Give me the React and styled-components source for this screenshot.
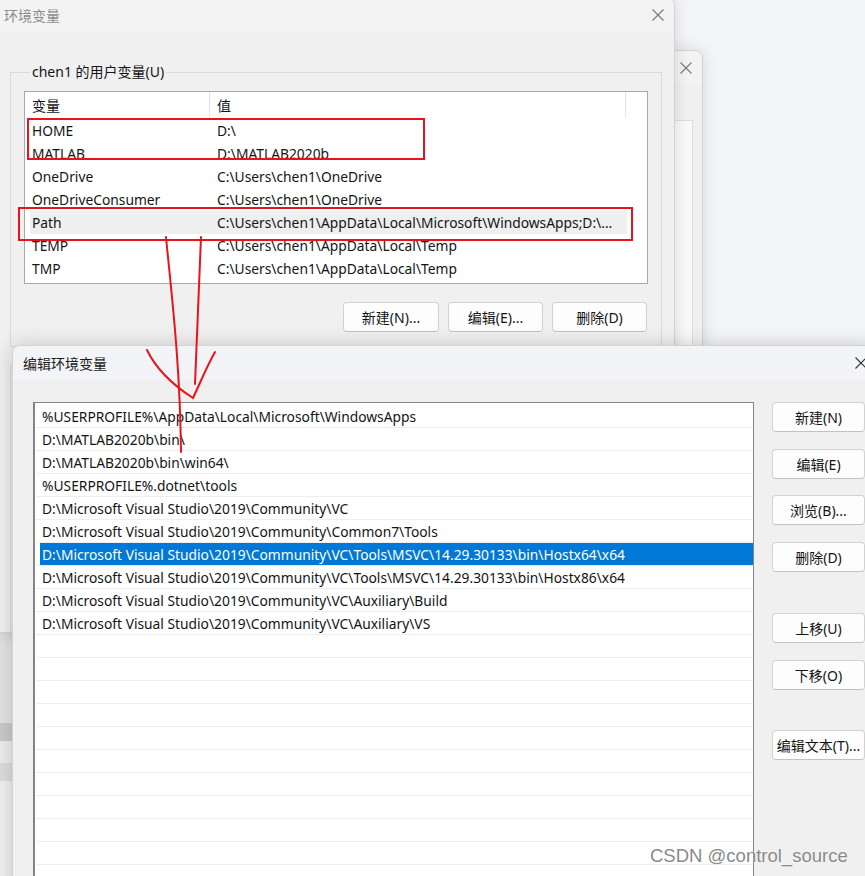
import React from 'react';
import styled, { createGlobalStyle } from 'styled-components';

const uiFont = `"Noto Sans", "Noto Sans CJK SC", sans-serif`;

const GlobalStyle = createGlobalStyle`
  * { box-sizing: border-box; }
  html, body { margin: 0; padding: 0; }
  body { font-family: ${uiFont}; }
`;

const Desktop = styled.div`
  position: relative;
  width: 865px;
  height: 876px;
  overflow: hidden;
  background: #f4f5f7;
  font-family: ${uiFont};
  font-size: 14px;
  color: #141414;
`;

// windows sit on the desktop canvas, so they are placed absolutely
const Window = styled.div`
  position: absolute;
  display: flex;
  flex-direction: column;
  background: #f0f0f0;
  border: 1px solid #d3d3d3;
  box-shadow: 0 0 16px rgba(0, 0, 0, 0.13);
  overflow: hidden;
`;

const OwnerWindow = styled(Window)`
  left: -20px;
  top: 600px;
  width: 420px;
  height: 320px;
  z-index: 0;
  background: linear-gradient(
    #e3e3e3 0 122px,
    #c9c9c9 122px 140px,
    #ececec 140px 162px,
    #dcdcdc 162px 180px,
    #f0f0f0 180px
  );
`;

const SettingsWindow = styled(Window)`
  left: 300px;
  top: 50px;
  width: 403px;
  height: 320px;
  border-radius: 0 8px 0 0;
  z-index: 1;
`;

const EnvWindow = styled(Window)`
  left: -2px;
  top: -3px;
  width: 677px;
  height: 636px;
  border-radius: 0 8px 0 0;
  z-index: 2;
`;

const EditWindow = styled(Window)`
  left: 12px;
  top: 345px;
  width: 866px;
  height: 560px;
  border-radius: 8px 0 0 0;
  z-index: 3;
  box-shadow: 0 0 20px rgba(0, 0, 0, 0.18);
`;

const TitleBar = styled.div`
  flex: none;
  height: ${p => p.$height}px;
  display: flex;
  align-items: center;
  justify-content: space-between;
  padding: 0 10px 0 ${p => p.$indent}px;
  background: ${p => (p.$active ? '#f2f4f8' : '#f3f3f3')};
`;

const TitleText = styled.span`
  font-size: 14px;
  color: ${p => (p.$active ? '#1b1b1b' : '#8c8c8c')};
`;

const CloseMark = styled.svg`
  width: 12px;
  height: 12px;
  flex: none;
`;

const CloseIcon = ({ color = '#666' }) => (
  <CloseMark viewBox="0 0 12 12">
    <path d="M0.5 0.5 L11.5 11.5 M11.5 0.5 L0.5 11.5" stroke={color} strokeWidth="1.1" fill="none" />
  </CloseMark>
);

const SettingsBody = styled.div`
  flex: 1;
  display: flex;
  justify-content: flex-end;
  padding: 36px 9px 0 0;
`;

const SettingsPanel = styled.div`
  width: 300px;
  height: 240px;
  background: #f9f9f9;
  border: 1px solid #dedede;
`;

const EnvBody = styled.div`
  flex: 1;
  display: flex;
  flex-direction: column;
  padding: 30px 12px 0 11px;
`;

const GroupBox = styled.fieldset`
  margin: ${p => p.$top || 0}px 0 0 0;
  padding: 9px 13px 14px 13px;
  border: 1px solid #dadada;
  flex: ${p => (p.$fill ? 1 : 'none')};
  min-height: 0;
`;

const GroupLabel = styled.legend`
  margin-left: 6px;
  padding: 0 2px;
  font-size: 14px;
  line-height: 20px;
  color: #141414;
`;

const VarList = styled.div`
  height: 193px;
  background: #fff;
  border: 1px solid #a9a9a9;
  font-size: 13.8px;
`;

const VarHeader = styled.div`
  display: flex;
  height: 27px;
`;

const HeaderCell = styled.div`
  width: ${p => p.$width}px;
  display: flex;
  align-items: center;
  padding-left: 7px;
  border-right: 1px solid #e3e3e3;
  margin-bottom: 2px;
  font-size: 14px;
`;

const VarRow = styled.div`
  display: flex;
  align-items: center;
  height: 23px;
  width: 597px;
  margin-left: 5px;
  background: ${p => (p.$hover ? '#efefef' : 'transparent')};
`;

const VarName = styled.span`
  width: 180px;
  padding-left: 2px;
  white-space: nowrap;
`;

const VarValue = styled.span`
  padding-left: 7px;
  white-space: nowrap;
`;

const ButtonRow = styled.div`
  display: flex;
  justify-content: flex-end;
  gap: 9px;
  margin: 18px 1px 0 0;
`;

const DialogButton = styled.div`
  width: ${p => p.$width}px;
  height: 30px;
  display: flex;
  align-items: center;
  justify-content: center;
  background: #fdfdfd;
  border: 1px solid #d2d2d2;
  border-bottom-color: #c2c2c2;
  border-radius: 4px;
  font-size: 14px;
  color: #141414;
  margin-top: ${p => p.$gap || 0}px;
`;

const EditBody = styled.div`
  flex: 1;
  display: flex;
  gap: 18px;
  padding: 23px 0 0 20px;
`;

const PathList = styled.div`
  width: 721px;
  flex: none;
  background: #fff;
  border: 1px solid #858585;
  border-left-width: 2px;
  padding: 2px 0 0 1px;
  overflow: hidden;
  font-size: 13.8px;
`;

const PathRow = styled.div`
  height: 23px;
  display: flex;
  align-items: center;
  padding-left: 6px;
  border-bottom: 1px solid #eeeeee;
  white-space: nowrap;
  color: ${p => (p.$selected ? '#fff' : '#141414')};
  background: ${p =>
    p.$selected ? 'linear-gradient(to right, transparent 4px, #0078d7 4px)' : 'transparent'};
`;

const SideButtons = styled.div`
  display: flex;
  flex-direction: column;
  width: 93px;
`;

const Watermark = styled.div`
  position: absolute;
  left: 650px;
  top: 845px;
  z-index: 6;
  font-family: "Liberation Sans", Arial, sans-serif;
  font-size: 18.5px;
  color: #8a8a8a;
  text-shadow: 0 0 2px rgba(255, 255, 255, 0.9);
  white-space: nowrap;
`;

const AnnotationLayer = styled.svg`
  position: absolute;
  left: 0;
  top: 0;
  width: 865px;
  height: 876px;
  z-index: 5;
  pointer-events: none;
`;

const userVars = [
  ['HOME', 'D:\\'],
  ['MATLAB', 'D:\\MATLAB2020b'],
  ['OneDrive', 'C:\\Users\\chen1\\OneDrive'],
  ['OneDriveConsumer', 'C:\\Users\\chen1\\OneDrive'],
  ['Path', 'C:\\Users\\chen1\\AppData\\Local\\Microsoft\\WindowsApps;D:\\...'],
  ['TEMP', 'C:\\Users\\chen1\\AppData\\Local\\Temp'],
  ['TMP', 'C:\\Users\\chen1\\AppData\\Local\\Temp'],
];

const pathEntries = [
  '%USERPROFILE%\\AppData\\Local\\Microsoft\\WindowsApps',
  'D:\\MATLAB2020b\\bin\\',
  'D:\\MATLAB2020b\\bin\\win64\\',
  '%USERPROFILE%.dotnet\\tools',
  'D:\\Microsoft Visual Studio\\2019\\Community\\VC',
  'D:\\Microsoft Visual Studio\\2019\\Community\\Common7\\Tools',
  'D:\\Microsoft Visual Studio\\2019\\Community\\VC\\Tools\\MSVC\\14.29.30133\\bin\\Hostx64\\x64',
  'D:\\Microsoft Visual Studio\\2019\\Community\\VC\\Tools\\MSVC\\14.29.30133\\bin\\Hostx86\\x64',
  'D:\\Microsoft Visual Studio\\2019\\Community\\VC\\Auxiliary\\Build',
  'D:\\Microsoft Visual Studio\\2019\\Community\\VC\\Auxiliary\\VS',
];

const sideButtons = [
  { label: '新建(N)', gap: 0 },
  { label: '编辑(E)', gap: 17 },
  { label: '浏览(B)...', gap: 16 },
  { label: '删除(D)', gap: 17 },
  { label: '上移(U)', gap: 41 },
  { label: '下移(O)', gap: 17 },
  { label: '编辑文本(T)...', gap: 40 },
];

const SELECTED = 6;

const App = () => {
  const rows = [...pathEntries, ...Array(12).fill('')];

  return (
    <>
      <GlobalStyle />
      <Desktop>
        <OwnerWindow />

        <SettingsWindow>
          <TitleBar $height={33} $indent={10}>
            <span />
            <CloseIcon color="#777" />
          </TitleBar>
          <SettingsBody>
            <SettingsPanel />
          </SettingsBody>
        </SettingsWindow>

        <EnvWindow>
          <TitleBar $height={34} $indent={5}>
            <TitleText>环境变量</TitleText>
            <CloseIcon color="#777" />
          </TitleBar>
          <EnvBody>
            <GroupBox>
              <GroupLabel>chen1 的用户变量(U)</GroupLabel>
              <VarList>
                <VarHeader>
                  <HeaderCell $width={185}>变量</HeaderCell>
                  <HeaderCell $width={416}>值</HeaderCell>
                </VarHeader>
                {userVars.map(([name, value]) => (
                  <VarRow key={name} $hover={name === 'Path'}>
                    <VarName>{name}</VarName>
                    <VarValue>{value}</VarValue>
                  </VarRow>
                ))}
              </VarList>
              <ButtonRow>
                <DialogButton $width={96}>新建(N)...</DialogButton>
                <DialogButton $width={95}>编辑(E)...</DialogButton>
                <DialogButton $width={95}>删除(D)</DialogButton>
              </ButtonRow>
            </GroupBox>
            <GroupBox $top={18} $fill />
          </EnvBody>
        </EnvWindow>

        <EditWindow>
          <TitleBar $height={33} $indent={10} $active>
            <TitleText $active>编辑环境变量</TitleText>
            <CloseIcon color="#333" />
          </TitleBar>
          <EditBody>
            <PathList>
              {rows.map((entry, i) => (
                <PathRow key={i} $selected={i === SELECTED}>
                  {entry}
                </PathRow>
              ))}
            </PathList>
            <SideButtons>
              {sideButtons.map(b => (
                <DialogButton key={b.label} $gap={b.gap}>
                  {b.label}
                </DialogButton>
              ))}
            </SideButtons>
          </EditBody>
        </EditWindow>

        <AnnotationLayer viewBox="0 0 865 876">
          <g fill="none" stroke="#e8131b" strokeWidth="2" strokeLinecap="round">
            <rect x="28" y="119" width="396" height="40" />
            <rect x="19" y="208" width="613" height="32" />
            <path d="M166 237 C171 290 180 360 181 452" />
            <path d="M201 237 C199 290 197 340 195 384" />
            <path d="M147 350 C157 371 176 387 193 398 C201 381 207 366 215 352" />
          </g>
        </AnnotationLayer>

        <Watermark>CSDN @control_source</Watermark>
      </Desktop>
    </>
  );
};

export default App;
